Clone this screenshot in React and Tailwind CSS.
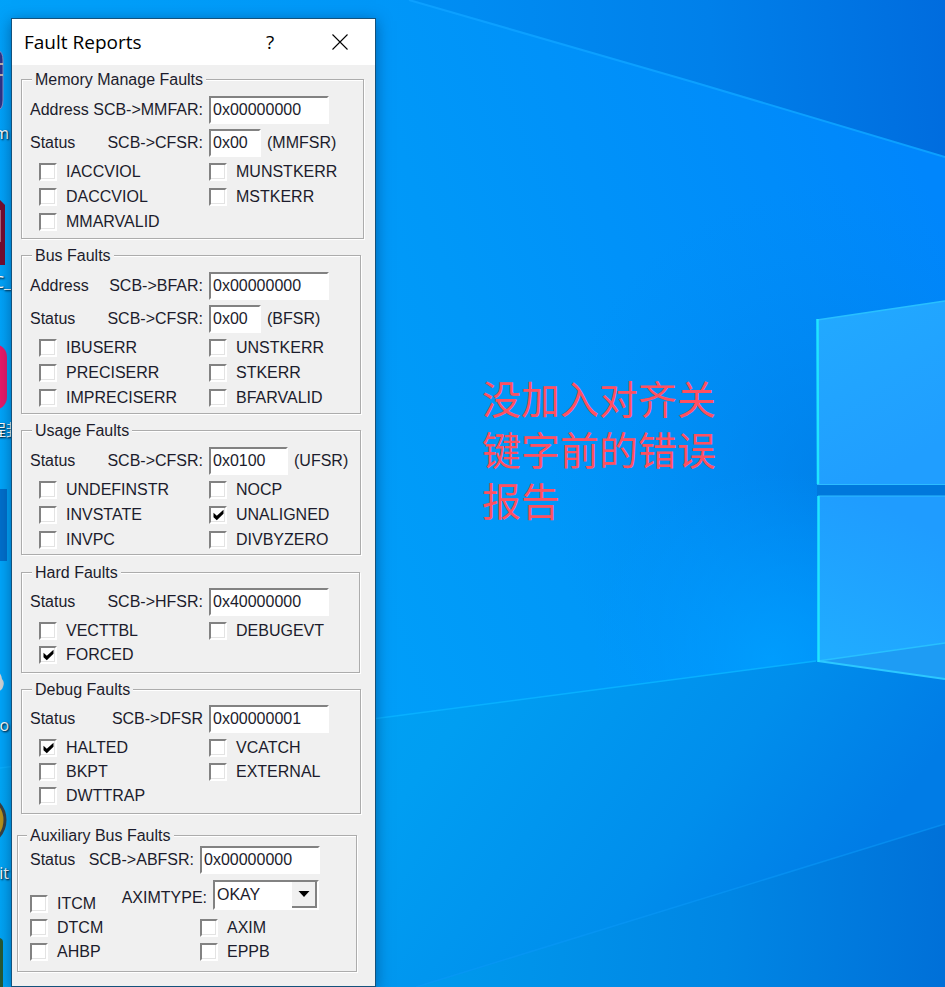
import React, { useState } from 'react';

const sunken = 'border-2 border-t-[#828282] border-l-[#828282] border-b-white border-r-white bg-white';

const groups = [
  {
    title: 'Memory Manage Faults',
    box: 'mr-[11px] pb-[4px]',
    fields: [
      { name: 'Address', reg: 'SCB->MMFAR:', value: '0x00000000', width: 'w-[120px]' },
      { name: 'Status', reg: 'SCB->CFSR:', value: '0x00', width: 'w-[52px]', suffix: '(MMFSR)' },
    ],
    flags: ['IACCVIOL', 'MUNSTKERR', 'DACCVIOL', 'MSTKERR', 'MMARVALID'],
  },
  {
    title: 'Bus Faults',
    box: 'mt-[6px] mr-[14px] pb-[3px]',
    fields: [
      { name: 'Address', reg: 'SCB->BFAR:', value: '0x00000000', width: 'w-[120px]' },
      { name: 'Status', reg: 'SCB->CFSR:', value: '0x00', width: 'w-[52px]', suffix: '(BFSR)' },
    ],
    flags: ['IBUSERR', 'UNSTKERR', 'PRECISERR', 'STKERR', 'IMPRECISERR', 'BFARVALID'],
  },
  {
    title: 'Usage Faults',
    box: 'mt-[6px] mr-[14px] pb-[2px]',
    fields: [{ name: 'Status', reg: 'SCB->CFSR:', value: '0x0100', width: 'w-[79px]', suffix: '(UFSR)' }],
    flags: ['UNDEFINSTR', 'NOCP', 'INVSTATE', 'UNALIGNED', 'INVPC', 'DIVBYZERO'],
    checked: ['UNALIGNED'],
  },
  {
    title: 'Hard Faults',
    box: 'mt-[7px] mr-[15px] pb-[5px]',
    dense: true,
    fields: [{ name: 'Status', reg: 'SCB->HFSR:', value: '0x40000000', width: 'w-[120px]' }],
    flags: ['VECTTBL', 'DEBUGEVT', 'FORCED'],
    checked: ['FORCED'],
  },
  {
    title: 'Debug Faults',
    box: 'mt-[6px] mr-[14px] pb-[5px]',
    dense: true,
    fields: [{ name: 'Status', reg: 'SCB->DFSR', value: '0x00000001', width: 'w-[120px]' }],
    flags: ['HALTED', 'VCATCH', 'BKPT', 'EXTERNAL', 'DWTTRAP'],
    checked: ['HALTED'],
  },
];

function GroupBox({ title, className, legend = 'ml-[2px]', children }) {
  return (
    <fieldset
      className={`min-w-0 border border-[#acacac] shadow-[1px_1px_0_#fff,inset_1px_1px_0_#fff] ${className}`}
    >
      <legend className={`h-5 bg-[#f0f0f0] px-[3px] leading-[22px] ${legend}`}>{title}</legend>
      {children}
    </fieldset>
  );
}

function Register({ group, name, reg, value, width, suffix, labelWidth = 'w-[173px]' }) {
  const id = `${group}-${reg}`.replace(/[^A-Za-z]/g, '');
  return (
    <div className="flex h-7 items-center gap-[6px]">
      <label htmlFor={id} className={`flex shrink-0 justify-between whitespace-nowrap ${labelWidth}`}>
        <span>{name}</span>
        <span>{reg}</span>
      </label>
      <input
        id={id}
        type="text"
        defaultValue={value}
        className={`h-7 shrink-0 px-[2px] text-[#1c1c2c] outline-none ${sunken} ${width}`}
      />
      {suffix && <span>{suffix}</span>}
    </div>
  );
}

function Flag({ name, defaultChecked = false }) {
  const [on, setOn] = useState(defaultChecked);
  return (
    <label className="flex items-center gap-[9px]">
      <span className="grid size-[18px]">
        <input
          type="checkbox"
          checked={on}
          onChange={(e) => setOn(e.target.checked)}
          className={`peer col-start-1 row-start-1 size-[18px] appearance-none shadow-[inset_-1px_-1px_0_#e3e3e3] ${sunken}`}
        />
        <svg
          viewBox="0 0 18 18"
          className="pointer-events-none invisible col-start-1 row-start-1 size-[18px] peer-checked:visible"
        >
          <path d="M4.5 6.8 L7.8 9.8 L14.5 3.8 V7.8 L7.8 14.2 L4.5 11.2 Z" fill="#000" />
        </svg>
      </span>
      <span>{name}</span>
    </label>
  );
}

function FaultWindow() {
  return (
    <section
      aria-label="Fault Reports"
      className="w-[365px] shrink-0 border border-[#14527c] bg-[#f0f0f0] text-base text-[#1c1c2c] shadow-[0_3px_14px_rgba(0,40,90,0.5)]"
    >
      <header className="flex h-[46px] items-center bg-white font-['Open_Sans','Noto_Sans',sans-serif] text-black">
        <h1 className="flex-1 pl-3 text-[19px] leading-6">Fault Reports</h1>
        <button type="button" aria-label="Help" className="grid h-full w-[70px] place-items-center text-[19px]">
          ?
        </button>
        <button type="button" aria-label="Close" className="grid h-full w-[70px] place-items-center">
          <svg viewBox="0 0 16 16" className="size-4">
            <path d="M0.5 0.5 L15.5 15.5 M15.5 0.5 L0.5 15.5" stroke="#000" strokeWidth="1.1" />
          </svg>
        </button>
      </header>

      <div className="pt-[4px] pb-[14px]">
        {groups.map((g) => (
          <GroupBox
            key={g.title}
            title={g.title}
            className={`ml-[9px] pl-[8px] ${g.dense ? 'pt-[6px]' : 'pt-[7px]'} ${g.box}`}
          >
            <div className="flex flex-col gap-[5px]">
              {g.fields.map((f) => (
                <Register key={f.reg} group={g.title} {...f} />
              ))}
            </div>
            <div
              className={`grid grid-cols-[170px_1fr] pl-[9px] ${
                g.dense ? 'mt-[3px] auto-rows-[24px]' : 'mt-[2px] auto-rows-[25px]'
              }`}
            >
              {g.flags.map((name) => (
                <Flag key={name} name={name} defaultChecked={g.checked?.includes(name)} />
              ))}
            </div>
          </GroupBox>
        ))}

        <GroupBox
          title="Auxiliary Bus Faults"
          legend="ml-[-3px]"
          className="mt-[11px] mr-[18px] ml-[5px] pt-[1px] pb-[7px] pl-[12px]"
        >
          <Register
            group="Auxiliary"
            name="Status"
            reg="SCB->ABFSR:"
            value="0x00000000"
            width="w-[120px]"
            labelWidth="w-[164px]"
          />
          <div className="mt-[6px] flex h-9 w-[289px] items-start justify-between">
            <div className="grid h-6 self-end">
              <Flag name="ITCM" />
            </div>
            <div className="flex items-end gap-[6px]">
              <label htmlFor="aximtype">AXIMTYPE:</label>
              <div className="grid">
                <select
                  id="aximtype"
                  defaultValue="OKAY"
                  className={`col-start-1 row-start-1 h-[30px] w-[106px] appearance-none pl-[2px] outline-none ${sunken}`}
                >
                  <option>OKAY</option>
                  <option>EXOKAY</option>
                  <option>SLVERR</option>
                  <option>DECERR</option>
                </select>
                <span className="pointer-events-none col-start-1 row-start-1 mr-[2px] grid h-[26px] w-[25px] place-items-center self-center justify-self-end border-r-2 border-b-2 border-[#828282] bg-[#f0f0f0]">
                  <svg viewBox="0 0 12 6" className="h-[6px] w-3">
                    <path d="M0.5 0 H11.5 L6 6 Z" fill="#000" />
                  </svg>
                </span>
              </div>
            </div>
          </div>
          <div className="grid auto-rows-[24px] grid-cols-[170px_1fr]">
            {['DTCM', 'AXIM', 'AHBP', 'EPPB'].map((name) => (
              <Flag key={name} name={name} />
            ))}
          </div>
        </GroupBox>
      </div>
    </section>
  );
}

function Wallpaper() {
  return (
    <svg
      viewBox="0 0 945 987"
      preserveAspectRatio="xMidYMid slice"
      className="absolute inset-0 h-full w-full"
      aria-hidden="true"
    >
      <defs>
        <linearGradient id="sky" gradientUnits="userSpaceOnUse" x1="0" y1="60" x2="945" y2="0">
          <stop offset="0" stopColor="#00a0f6" />
          <stop offset="0.5" stopColor="#008cf2" />
          <stop offset="0.75" stopColor="#0080ea" />
          <stop offset="1" stopColor="#006cde" />
        </linearGradient>
        <linearGradient id="beam" x1="0" y1="0.6" x2="1" y2="0.3">
          <stop offset="0" stopColor="#00a6fa" />
          <stop offset="0.5" stopColor="#0098f8" />
          <stop offset="0.85" stopColor="#008cfa" />
          <stop offset="1" stopColor="#0086fc" />
        </linearGradient>
        <linearGradient id="floor" x1="0" y1="0" x2="1" y2="0.25">
          <stop offset="0" stopColor="#00aaf8" />
          <stop offset="0.5" stopColor="#009ef2" />
          <stop offset="0.8" stopColor="#008eec" />
          <stop offset="1" stopColor="#007ce6" />
        </linearGradient>
        <linearGradient id="deep" gradientUnits="userSpaceOnUse" x1="400" y1="920" x2="945" y2="960">
          <stop offset="0" stopColor="#009cee" />
          <stop offset="0.6" stopColor="#0086e4" />
          <stop offset="1" stopColor="#0070d8" />
        </linearGradient>
        <radialGradient id="shade" gradientUnits="userSpaceOnUse" cx="850" cy="480" r="300">
          <stop offset="0" stopColor="#0074da" stopOpacity="0.55" />
          <stop offset="1" stopColor="#0088ee" stopOpacity="0" />
        </radialGradient>
        <radialGradient id="glow" gradientUnits="userSpaceOnUse" cx="770" cy="660" r="190">
          <stop offset="0" stopColor="#00a0ff" stopOpacity="0.8" />
          <stop offset="1" stopColor="#0098ff" stopOpacity="0" />
        </radialGradient>
        <linearGradient id="pane1" x1="0" y1="0" x2="0.4" y2="1">
          <stop offset="0" stopColor="#22aaff" />
          <stop offset="1" stopColor="#209eff" />
        </linearGradient>
        <linearGradient id="pane2" x1="0.4" y1="0" x2="0" y2="1">
          <stop offset="0" stopColor="#1f9cff" />
          <stop offset="1" stopColor="#20adff" />
        </linearGradient>
      </defs>
      <rect width="945" height="987" fill="url(#sky)" />
      <path d="M0 0 H409 L693 82 L945 157 V645 L816 661 L380 718 L0 768 Z" fill="url(#beam)" />
      <path d="M380 0 H409 L945 157 V645 L816 661 L380 718 Z" fill="url(#shade)" />
      <path d="M560 400 H945 V645 L816 661 L560 695 Z" fill="url(#glow)" />
      <path d="M0 768 L380 718 L816 661 H945 V987 H0 Z" fill="url(#floor)" />
      <path d="M416 987 L945 824 V987 Z" fill="url(#deep)" />
      <path d="M409 0 L693 82 L945 157" fill="none" stroke="#0ca0ff" strokeWidth="2" />
      <path d="M0 768 L380 718 L816 661" fill="none" stroke="#08b0ff" strokeWidth="1.5" />
      <path d="M416 987 L945 824" fill="none" stroke="#0a98f6" strokeOpacity="0.6" strokeWidth="1.5" />

      <path d="M817 320 L945 301 V484 H817 Z" fill="url(#pane1)" />
      <path d="M818 496 H945 V643 L818 661 Z" fill="url(#pane2)" />
      <path d="M818 661 L945 643 V679 Z" fill="#1e9cf4" />
      <path d="M817 484 H945 V496 H817 Z" fill="#0078dc" />
      <path d="M817 484.5 H945 M818 496 H945" stroke="#2cbcff" strokeWidth="1.2" />
      <path d="M817 320 L945 301 M818 661 L945 643" stroke="#28c0ff" strokeWidth="1.5" />
      <path d="M818 661 L945 679" stroke="#2cc8ff" strokeWidth="2" />
      <path d="M817.5 319 L818 484 M818.5 496 V662" stroke="#20e4ff" strokeWidth="2.5" />
    </svg>
  );
}

// Shortcuts in the first desktop column, only their right edge is on screen
function DesktopIcons() {
  const caption = 'absolute whitespace-nowrap text-white [text-shadow:1px_1px_2px_#000]';
  return (
    <div className="absolute inset-y-0 left-0 w-[11px] overflow-hidden font-['Open_Sans','Noto_Sans_CJK_SC',sans-serif] text-base leading-6">
      <svg viewBox="0 0 11 987" className="absolute top-0 left-0 h-[987px] w-[11px]" aria-hidden="true">
        <path d="M-10 50 H-2 Q3 52 3 60 V100 Q3 109 -2 110 H-10 Z" fill="#2e3386" stroke="#8b8fc8" />
        <path d="M-2 64 H3 M-2 75 H3" stroke="#f0d9b0" strokeWidth="1.5" />
        <path d="M-2 200 H0 L5 205 V265 H-2 Z" fill="#780c2c" />
        <path d="M0 210 V242" stroke="#c08898" strokeWidth="1.5" />
        <rect x="-50" y="344" width="57" height="66" rx="13" fill="#ec1866" />
        <rect x="-5" y="489" width="12" height="72" fill="#0070cc" />
        <path d="M-2 672 Q1 673 2 679 Q5 682 3 687 Q2 691 -2 691 Z" fill="#d4d4d4" />
        <circle cx="-20" cy="820" r="25" fill="#b8941a" stroke="#3c4040" strokeWidth="3" />
        <path d="M-5 938 H0 Q3 939 3 942 V987 H-5 Z" fill="#285a32" />
      </svg>
      <span className={`top-[121px] right-[2px] ${caption}`}>m</span>
      <span className={`top-[270px] right-0 ${caption}`}>C_</span>
      <span className={`top-[418px] left-[-10px] ${caption}`}>程封</span>
      <span className={`top-[713px] right-[2px] ${caption}`}>o</span>
      <span className={`top-[861px] right-[2px] ${caption}`}>it</span>
    </div>
  );
}

export default function App() {
  return (
    <main className="relative flex min-h-screen items-start overflow-hidden bg-[#0090f0] pt-[18px] pl-[11px] font-['Liberation_Sans',Arial,sans-serif]">
      <Wallpaper />
      <DesktopIcons />
      <div className="relative flex items-start">
        <FaultWindow />
        <p className="mt-[354px] ml-[106px] w-[234px] font-['Noto_Sans_CJK_SC',sans-serif] text-[39px] leading-[51px] text-[#ff5060]">
          没加入对齐关键字前的错误报告
        </p>
      </div>
    </main>
  );
}
